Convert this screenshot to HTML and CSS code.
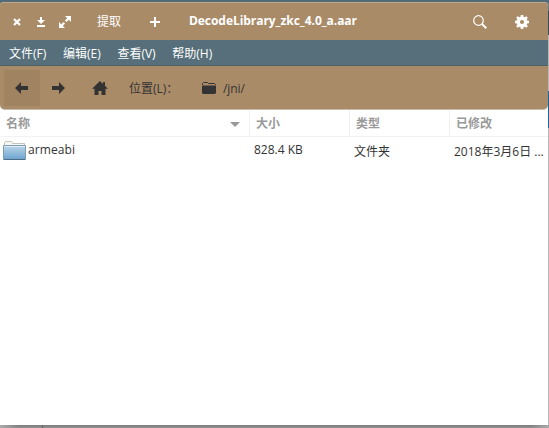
FILE: index.html
```html
<!DOCTYPE html>
<html lang="zh-CN">
<head>
<meta charset="utf-8">
<title>DecodeLibrary_zkc_4.0_a.aar</title>
<link rel="stylesheet" href="styles.css">
</head>
<body>
<div class="desktop">
<main class="window">
  <header class="titlebar">
    <svg class="close" width="8" height="8" viewBox="0 0 8 8"><path d="M1 1l6 6M7 1L1 7" stroke="#fff" stroke-width="2.2"/></svg>
    <svg class="minimize" width="8" height="10" viewBox="0 0 8 10"><path d="M3 0h2v3h3L4 7 0 3h3zM0 8h8v2H0z" fill="#fff"/></svg>
    <svg class="maximize" width="12" height="12" viewBox="0 0 12 12"><path d="M6 0h6v6L9.800 3.800 7.500 6.100 5.900 4.500 8.200 2.200zM0 6l2.200 2.200 2.300-2.300 1.600 1.600-2.300 2.300L6 12H0z" fill="#fff"/></svg>
    <span class="extract">提取</span>
    <svg class="add" width="10" height="10" viewBox="0 0 10 10"><path d="M4 0h2v4h4v2H6v4H4V6H0V4h4z" fill="#fff"/></svg>
    <h1 class="title">DecodeLibrary_zkc_4.0_a.aar</h1>
    <svg class="search" width="14" height="14" viewBox="0 0 14 14"><circle cx="5.500" cy="5.500" r="4.800" fill="none" stroke="#fff" stroke-width="1.200"/><path d="M9 9l4.300 4.300" stroke="#fff" stroke-width="2"/></svg>
    <svg class="gear" width="14" height="14" viewBox="0 0 14 14"><path fill="#fff" fill-rule="evenodd" d="M5.800 0h2.400l.4 1.900 1 .4 1.700-1.100 1.500 1.500-1.100 1.700.4 1 1.900.4v2.400l-1.900.4-.4 1 1.100 1.700-1.500 1.500-1.700-1.100-1 .4-.4 1.900H5.800l-.4-1.900-1-.4-1.700 1.100-1.500-1.500 1.100-1.700-.4-1L0 8.200V5.800l1.900-.4.4-1-1.100-1.700 1.500-1.500 1.700 1.100 1-.4zM7 4.900a2.100 2.100 0 1 0 0 4.200 2.100 2.100 0 0 0 0-4.200z"/></svg>
  </header>
  <nav class="menubar"><span>文件(F)</span><span>编辑(E)</span><span>查看(V)</span><span>帮助(H)</span></nav>
  <div class="toolbar">
    <span class="back"><svg width="13" height="12" viewBox="0 0 13 12"><path d="M0 6l6-6v4h7v4H6v4z" fill="#333"/></svg></span>
    <svg class="forward" width="13" height="12" viewBox="0 0 13 12"><path d="M13 6L7 0v4H0v4h7v4z" fill="#333"/></svg>
    <svg class="home" width="16" height="14" viewBox="0 0 16 14"><path d="M8 0l3 2.900V1h2v3.800l3 3H13.500V14H9.500v-4h-3v4h-4V7.800H0z" fill="#333"/></svg>
    <span class="place">位置(L)：</span>
    <svg class="folder" width="14" height="12" viewBox="0 0 14 12"><path d="M.5 3V1.500L1.500.5h4l1 1h6l1 1V3" fill="none" stroke="#333"/><path d="M0 3.500h14V11l-1 1H1l-1-1z" fill="#333"/></svg>
    <span class="path">/jni/</span>
  </div>
  <section class="list">
    <div class="row head"><span class="name">名称<i class="sort"></i></span><span>大小</span><span>类型</span><span>已修改</span></div>
    <div class="row file">
      <span class="name latin"><svg width="23" height="20" viewBox="0 0 23 20"><defs><linearGradient id="f" x2="0" y2="1"><stop offset="0" stop-color="#bdd7ea"/><stop offset="1" stop-color="#6ba4cf"/></linearGradient></defs><path d="M1.500 6V1.500L2.500.5h6l1 1v1h12V6z" fill="#f6f6f3" stroke="#c4c4bf"/><path d="M.5 4.500h22v13.500l-.5.5H1l-.5-.5z" fill="url(#f)" stroke="#7d9db3"/><path d="M1 5.500h21" stroke="#dcebf5"/><path d="M.5 18.500h22" stroke="#4d6c83"/></svg><b class="label">armeabi</b></span>
      <span class="latin">828.4 KB</span><span>文件夹</span><span>2018年3月6日 ...</span>
    </div>
  </section>
</main>
<div class="backdrop"></div>
<div class="shadow"></div>
</div>
</body>
</html>
```

FILE: styles.css
```css
* { box-sizing: border-box; }
body {
  margin: 0;
  font: 12px/18px "Open Sans", "Noto Sans CJK SC", sans-serif;
  color: #333;
  background: #516c77;
}
svg { display: block; flex: none; }
.desktop {
  width: 549px;
  height: 428px;
  padding-top: 2px;
  display: grid;
  grid-template: 423px 3px / 548px 1px;
  overflow: hidden;
}
.window {
  background: #fff;
  border-radius: 4px 4px 0 0;
  overflow: hidden;
  white-space: nowrap;
}
.titlebar {
  height: 38px;
  display: flex;
  align-items: center;
  background: #a98b68;
  border-top: 1px solid #bea88e;
  color: #fff;
}
.close { margin-left: 13px; }
.minimize { margin-left: 16px; }
.maximize { margin-left: 14px; }
.extract { margin-left: 26px; width: 24px; }
.add { margin-left: 29px; }
.title {
  margin: 0 0 0 29px;
  padding-bottom: 2px;
  font-size: 12px;
  line-height: 18px;
  font-weight: 700;
  letter-spacing: -0.05px;
}
.search { margin-left: auto; }
.gear { margin: 0 19px 0 28px; }
.menubar {
  height: 26px;
  padding: 2px 0 0 9px;
  display: flex;
  gap: 16.7px;
  align-items: center;
  background: #566f7a;
  border-bottom: 1px solid #4c626b;
  color: #fff;
}
.toolbar {
  height: 44px;
  padding-left: 4px;
  display: flex;
  align-items: center;
  background: #a98b68;
  border-bottom: 1px solid #c5bbae;
  border-radius: 0 0 5px 5px;
}
.back {
  width: 36px;
  height: 36px;
  padding-left: 11px;
  display: grid;
  align-items: center;
  background: #a08361;
}
.forward { margin-left: 12px; }
.home { margin-left: 27px; }
.place { margin-left: 21px; width: 56px; padding-top: 2px; }
.folder { margin-left: 17px; }
.path { margin-left: 7px; padding-top: 2px; letter-spacing: -0.1px; }
.row {
  display: grid;
  grid-template-columns: 250px 100px 100px 98px;
}
.row > span { display: flex; align-items: center; }
.head { height: 27px; font-weight: 700; color: #999; border-bottom: 1px solid #f2f2f2; }
.head > span { padding: 2px 0 0 6px; border-right: 1px solid #f0f0f0; }
.head > span:last-child { border-right: 0; }
.head .name { justify-content: space-between; padding-right: 9px; }
.sort { border: 5px solid transparent; border-top-color: #999; border-bottom: 0; }
.file { height: 28px; }
.file > span { padding: 1px 0 0 4px; }
.file > .latin { padding: 0 0 2px 4px; }
.file > .name { padding: 0 0 0 3px; gap: 2px; }
.label { padding-bottom: 2px; font-weight: 400; letter-spacing: 0.1px; }
.backdrop {
  background: linear-gradient(#627c86 0 9px, #35505b 9px 33px, #b7b7b7 33px 89px, #1268a0 89px 126px, #b7b7b7 126px);
}
.shadow {
  grid-column: 1 / -1;
  background: linear-gradient(90deg, #aaa, transparent 18px 42px, #666 42px 43px, transparent 43px 531px, #aaa), linear-gradient(#7d7d7d, #909090);
}
```
